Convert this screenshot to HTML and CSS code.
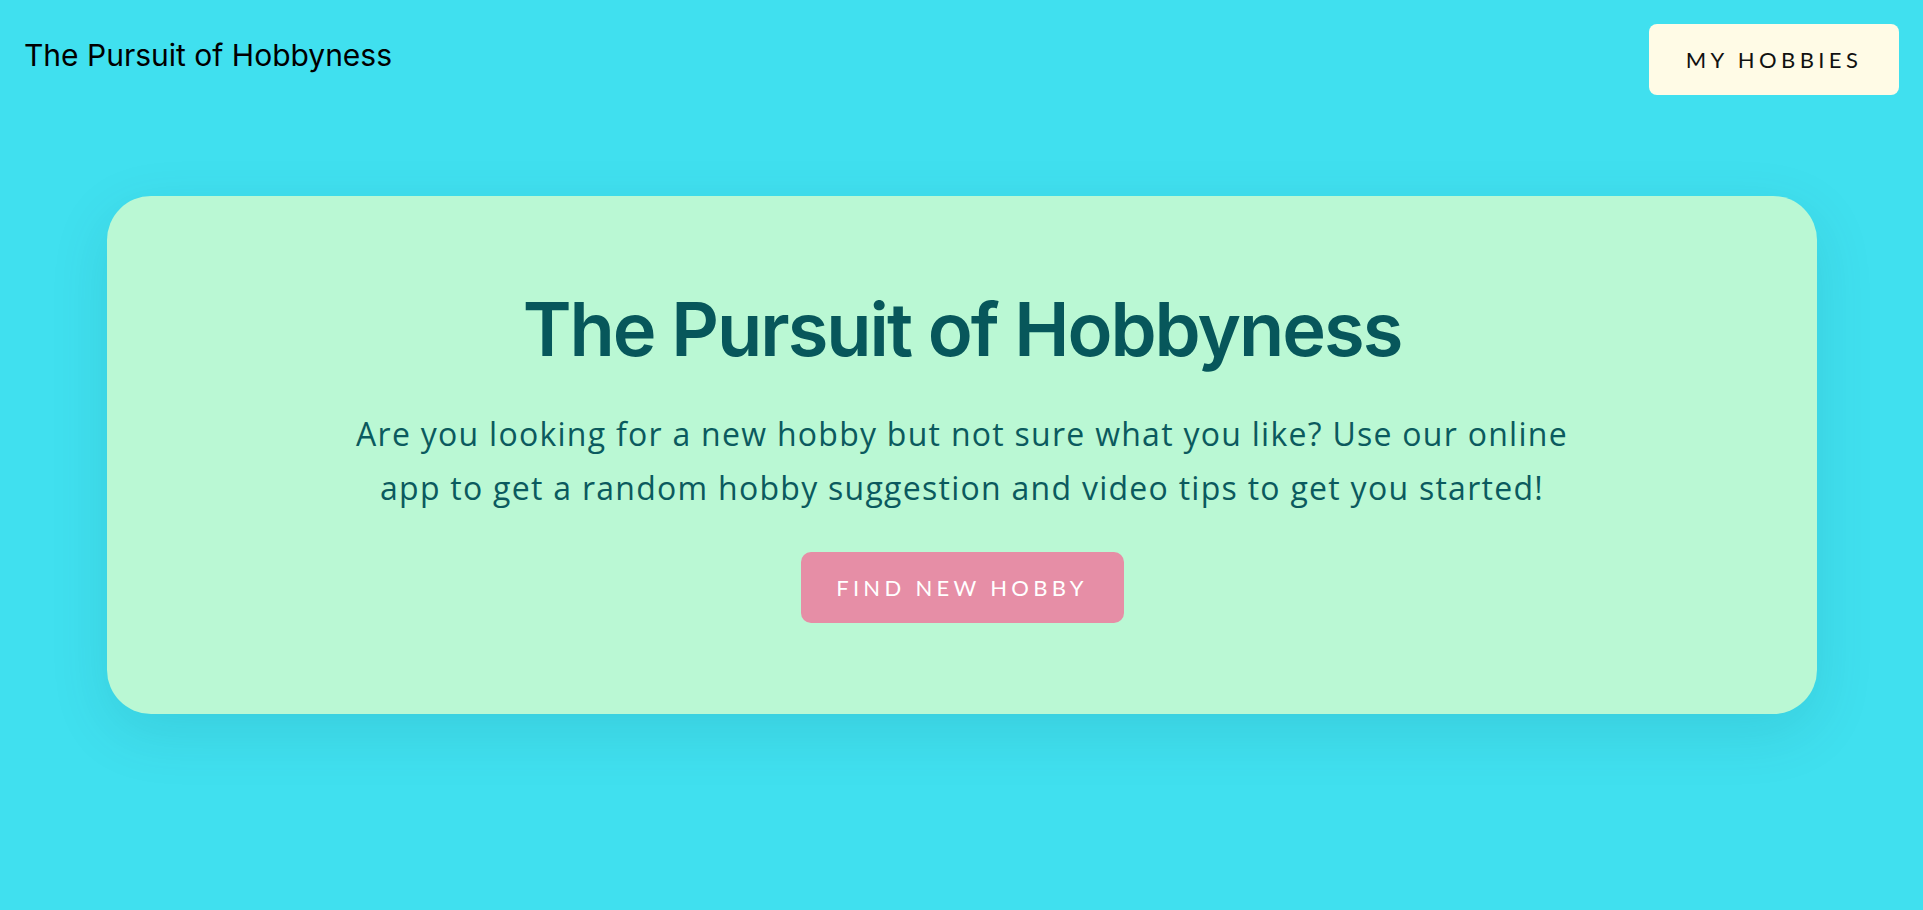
FILE: index.html
```html
<!DOCTYPE html>
<html lang="en">
<head>
<meta charset="utf-8">
<title>The Pursuit of Hobbyness</title>
<link rel="stylesheet" href="styles.css">
</head>
<body>
  <header class="topbar">
    <div class="brand">The Pursuit of Hobbyness</div>
    <button class="btn-cream">MY HOBBIES</button>
  </header>
  <main class="main">
    <section class="hero">
      <h1 class="hero-title">The Pursuit of Hobbyness</h1>
      <p class="hero-text">Are you looking for a new hobby but not sure what you like? Use our online app to get a random hobby suggestion and video tips to get you started!</p>
      <button class="btn-pink">FIND NEW HOBBY</button>
    </section>
  </main>
</body>
</html>
```

FILE: styles.css
```css
* { box-sizing: border-box; }
html, body { margin: 0; padding: 0; }
body {
  background: #40e0ef;
  min-height: 910px;
  font-family: "Lato", "Noto Sans", sans-serif;
  overflow: hidden;
}
.topbar {
  display: flex;
  justify-content: space-between;
  align-items: flex-start;
  padding: 24px 24px 0 24px;
}
.brand {
  font-family: "Inter", "Noto Sans", sans-serif;
  font-size: 30px;
  color: #000;
  line-height: 1;
  padding-top: 16px;
}
.btn-cream {
  width: 250px;
  height: 71px;
  border: none;
  border-radius: 8px;
  background: #fffbe6;
  color: #111;
  font-family: "Lato", "Noto Sans", sans-serif;
  font-size: 22px;
  letter-spacing: 4.4px;
  padding: 0;
  cursor: pointer;
}
.main {
  padding: 101px 106px 0 107px;
}
.hero {
  background: #baf8d4;
  border-radius: 44px;
  box-shadow: 0 18px 60px rgba(0, 70, 90, 0.12);
  padding: 88px 40px 91px;
  display: flex;
  flex-direction: column;
  align-items: center;
  text-align: center;
}
.hero-title {
  margin: 0;
  font-family: "Inter", "Noto Sans", sans-serif;
  font-weight: 600;
  font-size: 74px;
  line-height: 91px;
  letter-spacing: -2px;
  color: #07575b;
}
.hero-text {
  margin: 32px 0 0;
  max-width: 1250px;
  font-family: "Open Sans", "Noto Sans", sans-serif;
  font-size: 32px;
  letter-spacing: 1.27px;
  line-height: 54px;
  color: #0b5a5e;
}
.btn-pink {
  margin-top: 37px;
  width: 323px;
  height: 71px;
  border: none;
  border-radius: 10px;
  background: #e68ea6;
  color: #fff;
  font-family: "Lato", "Noto Sans", sans-serif;
  font-size: 22px;
  letter-spacing: 4.3px;
  padding: 0;
  cursor: pointer;
}
```
